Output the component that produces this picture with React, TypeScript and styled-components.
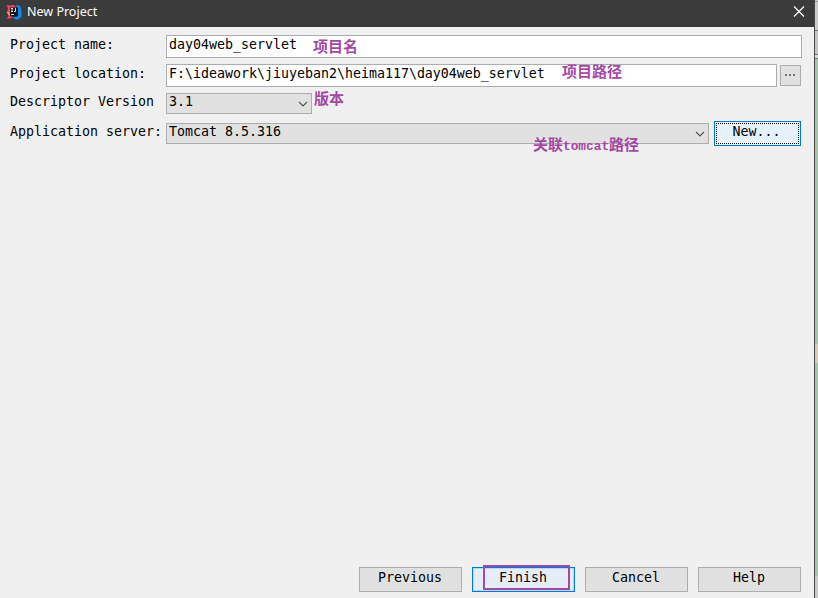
import React from "react";
import styled, { createGlobalStyle } from "styled-components";

const GlobalStyle = createGlobalStyle`
  *, *::before, *::after { box-sizing: border-box; }
  body { margin: 0; background: #f0f0f0; overflow: hidden; }
`;

const Desktop = styled.div`
  display: flex;
  width: 818px;
  height: 598px;
  font: 13.29px/16px "DejaVu Sans Mono", monospace;
  color: #000;
  white-space: pre;
`;

const Dialog = styled.main`
  position: relative;
  display: flex;
  flex-direction: column;
  width: 815px;
  height: 598px;
  background: #f0f0f0;
  border-right: 1px solid #4a4a4a;
`;

const TitleBar = styled.header`
  display: flex;
  align-items: center;
  flex: 0 0 27px;
  padding: 0 9px 3px 6px;
  background: #3b3b3b;
  color: #fff;
  font: 12.5px/16px "Noto Sans", sans-serif;
`;

const Title = styled.span`
  flex: 1;
  margin-left: 5px;
`;

const Form = styled.section`
  flex: 1;
  padding-top: 8px;
`;

const Row = styled.div<{ $height: number; $gap: number; $align?: string }>`
  display: flex;
  align-items: ${(p) => p.$align ?? "flex-start"};
  height: ${(p) => p.$height}px;
  margin-bottom: ${(p) => p.$gap}px;
  padding-left: 10px;
`;

const Label = styled.label<{ $top?: number; $bottom?: number }>`
  width: 156px;
  flex: none;
  padding-top: ${(p) => p.$top ?? 2}px;
  padding-bottom: ${(p) => p.$bottom ?? 0}px;
`;

const Field = styled.div<{ $width: number }>`
  width: ${(p) => p.$width}px;
  height: 23px;
  padding: 1px 2px;
  background: #fff;
  border: 1px solid #abadb3;
`;

const Select = styled.div<{ $width: number }>`
  display: flex;
  justify-content: space-between;
  width: ${(p) => p.$width}px;
  height: 21px;
  padding: 0 3px 0 2px;
  background: #e1e1e1;
  border: 1px solid #adadad;
  svg { margin-top: 7px; }
`;

const Button = styled.div<{ $primary?: boolean }>`
  display: flex;
  justify-content: center;
  width: 103px;
  height: 25px;
  padding: 2px 1px 0 0;
  background: ${(p) => (p.$primary ? "#e5edf8" : "#e1e1e1")};
  border: 1px solid ${(p) => (p.$primary ? "#0078d7" : "#adadad")};
  box-shadow: ${(p) => (p.$primary ? "inset 0 0 0 1px #b9d9f2" : "none")};
`;

const FocusedButton = styled.div`
  width: 87px;
  height: 25px;
  margin-left: 5px;
  padding: 1px;
  border: 1px solid #0078d7;
  background: #e5f1fb;
`;

const FocusRing = styled.div`
  height: 21px;
  border: 1px dotted #000;
  padding: 0 2px 0 0;
  text-align: center;
`;

const BrowseButton = styled.div`
  display: flex;
  align-items: center;
  justify-content: center;
  width: 21px;
  height: 21px;
  margin: 1px 0 0 3px;
  padding-bottom: 1px;
  background: #e1e1e1;
  border: 1px solid #adadad;
`;

const Footer = styled.footer`
  display: flex;
  gap: 10px;
  justify-content: flex-end;
  padding: 0 13px 6px 0;
`;

const Note = styled.span<{ $x: number; $y: number }>`
  position: absolute;
  left: ${(p) => p.$x}px;
  top: ${(p) => p.$y}px;
  color: #a349a4;
  font: bold 15px/18px "Noto Sans CJK SC", sans-serif;
`;

const Latin = styled.span`
  font: bold 12.8px/18px "Liberation Mono", monospace;
`;

const MarkerBox = styled.div`
  position: absolute;
  left: 483px;
  top: 565px;
  width: 87px;
  height: 25px;
  border: 2px solid #a349a4;
`;

const Backdrop = styled.aside`
  width: 3px;
  background: linear-gradient(
    #c9c9c9 0 1px, #999 1px 2px, #c9c9c9 2px 30px, #777 30px 31px,
    #c4c4c4 31px 54px, #777 54px 55px, #ddd 55px 58px, #777 58px 59px,
    #a5c5ad 59px 344px, #d8cbb8 344px 363px, #a5c5ad 363px 576px, #c9c9c9 576px
  );
`;

const Chevron = () => (
  <svg width="10" height="7" viewBox="0 0 10 7" fill="none" stroke="#555" strokeWidth="1.15">
    <path d="M1 1l4 4 4-4" />
  </svg>
);

const AppIcon = () => (
  <svg width="16" height="16" viewBox="0 0 16 16">
    <path fill="#f0456b" d="M1 1l3 .5L8 1l3 3-5 10-5 1 2-4-2-3 1-3z" />
    <path fill="#f68b3b" d="M.5 8l3 0 1 4-1.500 0z" />
    <path fill="#0d86f5" d="M10.500 0.500L14 2l1.500 4v7L11 16l-4-2 4-2z" />
    <path fill="#18171c" d="M4 3.500h8v9H4z" />
    <path stroke="#ddd" fill="none" d="M5 4.500h2M6 4.500v3M5 7.500h2M9.500 4v3.500H8M5 10.500h3" />
  </svg>
);

export default function App() {
  return (
    <>
      <GlobalStyle />
      <Desktop>
        <Dialog>
          <TitleBar>
            <AppIcon />
            <Title>New Project</Title>
            <svg width="12" height="12" viewBox="0 0 12 12" stroke="#fff" strokeWidth="1.1">
              <path d="M1 .5l10 10M11 .5L1 10.500" />
            </svg>
          </TitleBar>
          <Form>
            <Row $height={23} $gap={6}>
              <Label>Project name:</Label>
              <Field $width={636}>day04web_servlet</Field>
            </Row>
            <Row $height={23} $gap={6}>
              <Label>Project location:</Label>
              <Field $width={611}>F:\ideawork\jiuyeban2\heima117\day04web_servlet</Field>
              <BrowseButton>
                <svg width="11" height="2" viewBox="0 0 11 2" fill="#777">
                  <path d="M0 0h2v2H0zM4 0h2v2H4zM8 0h2v2H8z" />
                </svg>
              </BrowseButton>
            </Row>
            <Row $height={21} $gap={7}>
              <Label $top={1}>Descriptor Version</Label>
              <Select $width={146}>3.1<Chevron /></Select>
            </Row>
            <Row $height={25} $gap={0} $align="center">
              <Label $top={0} $bottom={3}>Application server:</Label>
              <Select $width={543}>Tomcat 8.5.316<Chevron /></Select>
              <FocusedButton><FocusRing>New...</FocusRing></FocusedButton>
            </Row>
          </Form>
          <Footer>
            <Button>Previous</Button>
            <Button $primary>Finish</Button>
            <Button>Cancel</Button>
            <Button>Help</Button>
          </Footer>
          <Note $x={313} $y={37}>项目名</Note>
          <Note $x={562} $y={62}>项目路径</Note>
          <Note $x={314} $y={89}>版本</Note>
          <Note $x={533} $y={135}>关联<Latin>tomcat</Latin>路径</Note>
          <MarkerBox />
        </Dialog>
        <Backdrop />
      </Desktop>
    </>
  );
}
